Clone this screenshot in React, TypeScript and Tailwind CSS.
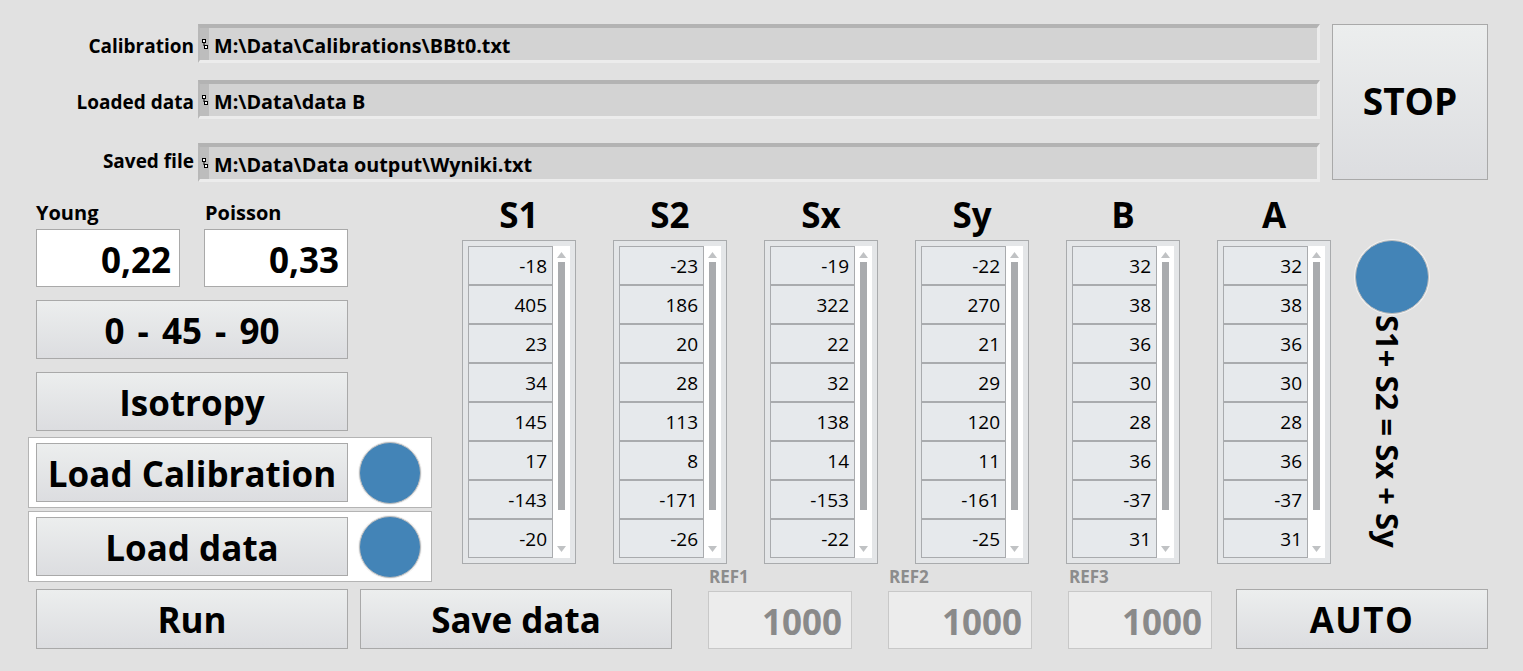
import React from "react";

const btnBase =
  "flex items-center justify-center border border-[#a9a9a9] bg-linear-to-b from-[#eceeee] to-[#dcdde0] font-bold text-black";
const btn = `${btnBase} pt-[3px]`;

function PathIcon() {
  return (
    <svg width="6" height="10" viewBox="0 0 6 10">
      <rect x="0.5" y="0.5" width="3" height="3" fill="#fff" stroke="#000" strokeWidth="1" />
      <line x1="2" y1="4" x2="2" y2="7" stroke="#000" strokeWidth="1" />
      <rect x="2.5" y="6.5" width="3" height="3" fill="#fff" stroke="#000" strokeWidth="1" />
    </svg>
  );
}

function PathRow({ label, value, cls, lcls }: { label: string; value: string; cls: string; lcls: string }) {
  return (
    <div className={`flex items-center ${cls}`}>
      <div className={`w-[194px] text-right text-[19px] font-bold leading-[22px] ${lcls}`}>{label}</div>
      <div className="ml-[4px] flex h-[39px] w-[1122px] border-t-[4px] border-r-[3px] border-b-[3px] border-l-[2px] border-t-[#b3b3b3] border-r-[#ececec] border-b-[#ececec] border-l-[#b8b8b8] bg-[#d3d3d3]">
        <div className="flex w-[9px] items-center justify-center bg-[#bdbdbd]">
          <PathIcon />
        </div>
        <div className="ml-[5px] flex items-center pt-[3px] text-[19.8px] font-bold leading-none">{value}</div>
      </div>
    </div>
  );
}

function Led({ size }: { size: number }) {
  return (
    <div
      className="rounded-full border border-[#bdbdbd] bg-[#4384b7] shadow-[0_0_0_1px_#f2f2f2]"
      style={{ width: size, height: size }}
    />
  );
}

function Column({ title, values }: { title: string; values: number[] }) {
  return (
    <div className="flex w-[114px] flex-col items-center">
      <div className="h-[38px] text-[35px] font-bold leading-[38px]">{title}</div>
      <div className="mt-[6px] flex h-[324px] w-[114px] border border-[#a9abad] bg-[#e4e6e8] p-[5px]">
        <div className="flex w-[85px] flex-col">
          {values.map((v, i) => (
            <div
              key={i}
              className="flex h-[39px] items-center justify-end border border-[#a9abae] bg-[#e6e9ec] pt-[1px] pr-[5px] text-[19px] leading-none"
            >
              {v}
            </div>
          ))}
        </div>
        <div className="flex w-[17px] flex-col items-center bg-white">
          <svg width="9" height="6" viewBox="0 0 9 6" className="mt-[6px]">
            <polygon points="4.5,0 9,6 0,6" fill="#c0c2c4" />
          </svg>
          <div className="mt-[4px] h-[248px] w-[7px] bg-[#a9abae]" />
          <div className="flex-1" />
          <svg width="9" height="6" viewBox="0 0 9 6" className="mb-[6px]">
            <polygon points="0,0 9,0 4.5,6" fill="#c0c2c4" />
          </svg>
        </div>
      </div>
    </div>
  );
}

function RefBox({ label }: { label: string }) {
  return (
    <div className="-mt-[24px] flex w-[144px] flex-col">
      <div className="h-[24px] pl-[1px] text-[17px] font-bold leading-[20px] text-[#8c8c8c]">{label}</div>
      <div className="flex h-[58px] items-center justify-end border border-[#c8c8c8] bg-[#ececec] pt-[3px] pr-[9px] text-[35px] font-bold leading-none text-[#8a8a8a]">
        1000
      </div>
    </div>
  );
}

export default function App() {
  const cols: { t: string; v: number[] }[] = [
    { t: "S1", v: [-18, 405, 23, 34, 145, 17, -143, -20] },
    { t: "S2", v: [-23, 186, 20, 28, 113, 8, -171, -26] },
    { t: "Sx", v: [-19, 322, 22, 32, 138, 14, -153, -22] },
    { t: "Sy", v: [-22, 270, 21, 29, 120, 11, -161, -25] },
    { t: "B", v: [32, 38, 36, 30, 28, 36, -37, 31] },
    { t: "A", v: [32, 38, 36, 30, 28, 36, -37, 31] },
  ];
  return (
    <div className="h-[671px] w-[1523px] overflow-hidden bg-[#e1e1e1] pt-[24px] font-['Open_Sans',sans-serif] text-black">
      {/* top */}
      <div className="flex">
        <div className="flex w-[1320px] flex-col">
          <PathRow label="Calibration" value="M:\Data\Calibrations\BBt0.txt" cls="" lcls="pt-[5px]" />
          <PathRow label="Loaded data" value="M:\Data\data B" cls="mt-[17px]" lcls="pt-[5px]" />
          <PathRow label="Saved file" value="M:\Data\Data output\Wyniki.txt" cls="mt-[24px]" lcls="pb-[3px]" />
        </div>
        <div className={`${btnBase} ml-[12px] h-[156px] w-[156px] pb-[2px] text-[37px]`}>STOP</div>
      </div>

      {/* middle */}
      <div className="mt-[14px] flex">
        <div className="ml-[28px] flex w-[404px] flex-col">
          <div className="mt-[6px] flex pl-[8px] text-[20px] font-bold leading-[22px]">
            <div className="w-[169px]">Young</div>
            <div>Poisson</div>
          </div>
          <div className="mt-[5px] flex gap-[24px] pl-[8px]">
            <div className="flex h-[58px] w-[144px] items-center justify-end border border-[#a9a9a9] bg-white pt-[3px] pr-[8px] text-[35px] font-bold leading-none">
              0,22
            </div>
            <div className="flex h-[58px] w-[144px] items-center justify-end border border-[#a9a9a9] bg-white pt-[3px] pr-[8px] text-[35px] font-bold leading-none">
              0,33
            </div>
          </div>
          <div className={`${btn} mt-[13px] ml-[8px] h-[59px] w-[312px] text-[35px] [word-spacing:4px]`}>0 - 45 - 90</div>
          <div className={`${btn} mt-[13px] ml-[8px] h-[59px] w-[312px] text-[35px]`}>Isotropy</div>
          <div className="mt-[6px] flex h-[71px] items-center border border-[#b4b4b4] bg-white pl-[7px]">
            <div className={`${btn} h-[59px] w-[312px] text-[35px]`}>Load Calibration</div>
            <div className="ml-[11px]">
              <Led size={62} />
            </div>
          </div>
          <div className="mt-[3px] flex h-[71px] items-center border border-[#b4b4b4] bg-white pl-[7px]">
            <div className={`${btn} h-[59px] w-[312px] text-[35px]`}>Load data</div>
            <div className="ml-[11px]">
              <Led size={62} />
            </div>
          </div>
        </div>

        <div className="ml-[30px] flex gap-[37px]">
          {cols.map((c) => (
            <Column key={c.t} title={c.t} values={c.v} />
          ))}
        </div>

        <div className="ml-[24px] flex flex-col items-center pt-[44px]">
          <Led size={74} />
          <div className="mt-[1px] mr-[8px] text-[31px] font-bold leading-[32px] [writing-mode:vertical-rl]">
            S1+ S2 = Sx + Sy
          </div>
        </div>
      </div>

      {/* bottom */}
      <div className="mt-[7px] flex items-end pl-[36px]">
        <div className={`${btn} h-[60px] w-[312px] text-[35px]`}>Run</div>
        <div className={`${btn} ml-[12px] h-[60px] w-[312px] text-[35px]`}>Save data</div>
        <div className="ml-[36px]">
          <RefBox label="REF1" />
        </div>
        <div className="ml-[36px]">
          <RefBox label="REF2" />
        </div>
        <div className="ml-[36px]">
          <RefBox label="REF3" />
        </div>
        <div className={`${btn} ml-[24px] h-[60px] w-[252px] text-[35px] tracking-[1.5px]`}>AUTO</div>
      </div>
    </div>
  );
}
